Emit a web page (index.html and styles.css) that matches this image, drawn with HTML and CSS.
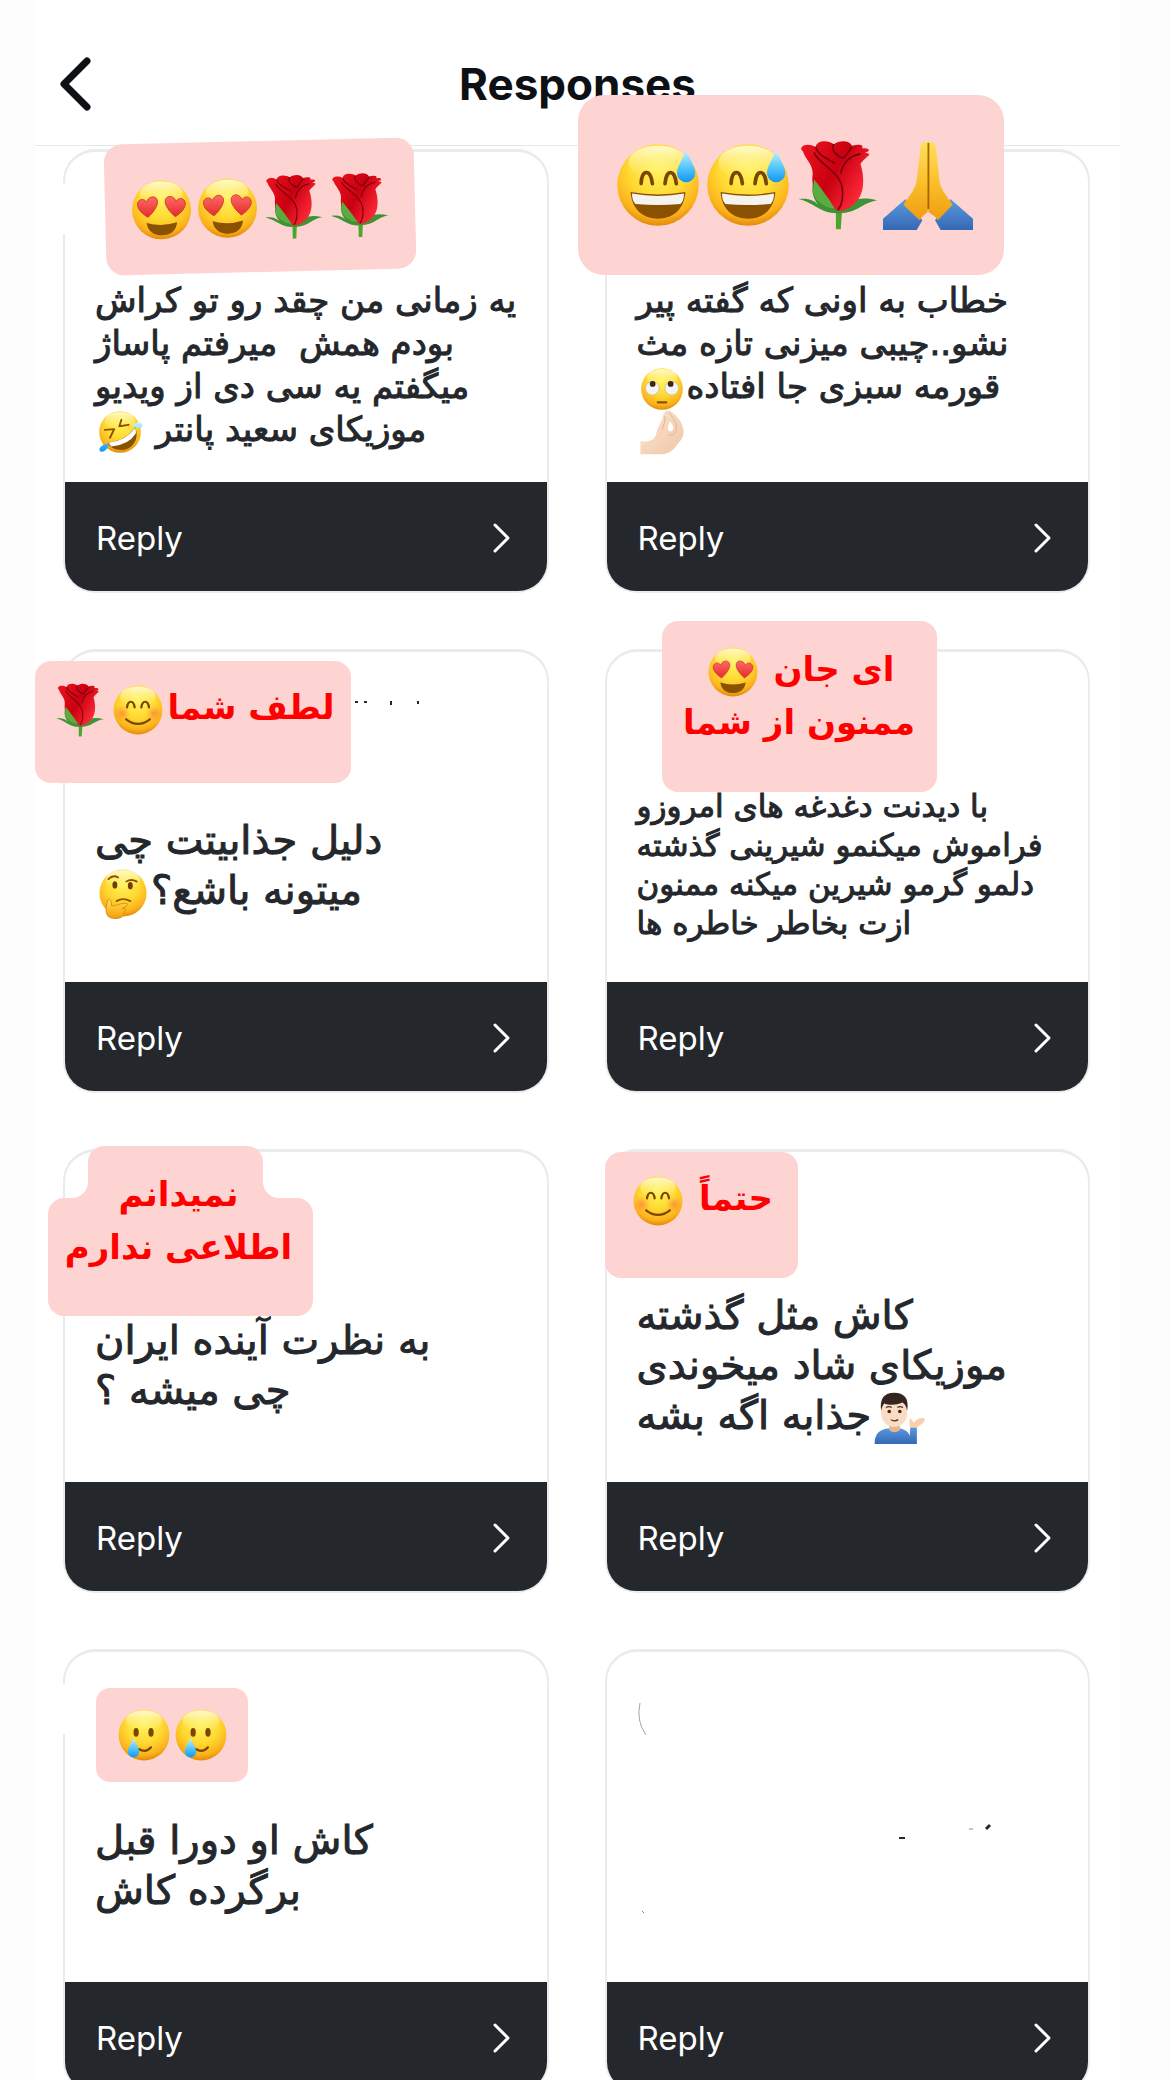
FILE: index.html
```html
<!DOCTYPE html>
<html lang="en">
<head>
<meta charset="utf-8">
<meta name="viewport" content="width=device-width, initial-scale=1">
<title>Responses</title>
<link rel="stylesheet" href="styles.css">
</head>
<body>
<svg class="defs" width="0" height="0" aria-hidden="true">
  <defs>
    <radialGradient id="g-face" cx=".5" cy=".3" r=".72">
      <stop offset="0" stop-color="#fff35c"/><stop offset=".5" stop-color="#ffd932"/><stop offset=".82" stop-color="#fbb21b"/><stop offset="1" stop-color="#dd8308"/>
    </radialGradient>
    <linearGradient id="g-shine" x2="0" y2="1"><stop offset="0" stop-color="#fffde0" stop-opacity=".9"/><stop offset="1" stop-color="#fff58a" stop-opacity="0"/></linearGradient>
    <linearGradient id="g-heart" x2="0" y2="1"><stop offset="0" stop-color="#ff6a63"/><stop offset="1" stop-color="#e32b2f"/></linearGradient>
    <linearGradient id="g-drop" x2="0" y2="1"><stop offset="0" stop-color="#c9f2ff"/><stop offset=".5" stop-color="#5ccbff"/><stop offset="1" stop-color="#1196f0"/></linearGradient>
    <linearGradient id="g-rose" x2="1" y2=".6"><stop offset="0" stop-color="#f0141f"/><stop offset=".55" stop-color="#c9000f"/><stop offset="1" stop-color="#ff2a3a"/></linearGradient>
    <linearGradient id="g-hand" x2="0" y2="1"><stop offset="0" stop-color="#ffe05a"/><stop offset=".5" stop-color="#fbc02c"/><stop offset="1" stop-color="#ef9c10"/></linearGradient>
    <linearGradient id="g-sleeve" x2="0" y2="1"><stop offset="0" stop-color="#5c9be0"/><stop offset="1" stop-color="#3468b4"/></linearGradient>
    <linearGradient id="g-skin" x2="1" y2="1"><stop offset="0" stop-color="#fbe6d3"/><stop offset="1" stop-color="#efc6a6"/></linearGradient>
    <radialGradient id="g-blush"><stop offset="0" stop-color="#ff6b3d" stop-opacity=".6"/><stop offset="1" stop-color="#ff8a3d" stop-opacity="0"/></radialGradient>
    <symbol id="face" viewBox="0 0 64 64">
      <circle cx="32" cy="32" r="29" fill="url(#g-face)"/>
      <ellipse cx="32" cy="16" rx="21" ry="12" fill="url(#g-shine)"/>
    </symbol>
    <symbol id="love" viewBox="0 0 64 64">
      <use href="#face"/>
      <path id="heart" d="M18.500 39C12 35 8 30 8.500 25.500 9 21 15 19.500 17.500 24 19 18.500 26 17 28 22 29.500 27 24 34.500 18.500 39Z" fill="url(#g-heart)" stroke="#c8312c" stroke-width=".8"/>
      <use href="#heart" transform="matrix(-1 0 0 1 64 0)"/>
      <path d="M17 44.500Q32 49 47 44.500C46 53 40 57 32 57S18 53 17 44.500Z" fill="#8a5200"/>
    </symbol>
    <symbol id="sweat" viewBox="0 0 64 64">
      <use href="#face"/>
      <path d="M20 31C20 21 27 20 28 31M37 31C38 20 44 21 45 31" fill="none" stroke="#7a4500" stroke-width="2.600" stroke-linecap="round"/>
      <path d="M12.500 37Q32 40.500 51.500 37C50.500 50 42 56 32 56S13.500 50 12.500 37Z" fill="#8a5200"/>
      <path d="M13.500 38Q32 41.500 50.500 38Q50.500 43 48 45.500Q32 47 16 45.500Q13.500 43 13.500 38Z" fill="#f5f3f0"/>
      <path d="M52 7C49 15 45.500 19 45.500 23.500a6.500 6.500 0 0 0 13 0C58.500 19 55 15 52 7Z" fill="url(#g-drop)"/>
    </symbol>
    <symbol id="rose" viewBox="0 0 64 64">
      <path d="M30.500 48h4.500l-1 15.500h-3.500Z" fill="#4fa52c"/>
      <path d="M4 42C11 41 15 43 18 46C13 40 13 34 15 28C20 34 24 40 31 48C40 42 50 40 60 43C50 44 46 52 33 52C20 53 16 45 4 42Z" fill="#3f9235"/>
      <path d="M7 8C3 5 10 1 16 5C17 0 25 0 29 3C33 0 40 0 42 4C46 3 51 3 49 6C54 5 56 8 51 9C58 10 52 11 48 17C52 30 51 46 34 50.500C22 48 12 38 14 24C14 17 9 14 7 8Z" fill="url(#g-rose)"/>
      <path d="M15 28C20 34 25 41 30 49C22 48 15 43 14 36Z" fill="#5daa3e"/>
      <path d="M15 9C18 17 33 22 35 34C36 41 34 47 32 50M48 10C40 11 35 17 34 24M16 5C18 12 27 14 30 17M29 3C26 7 32 12 36 13L42 5" fill="none" stroke="#7d0010" stroke-width="1.200"/>
    </symbol>
    <symbol id="pray" viewBox="0 0 64 64">
      <path d="M0 56L16 42 28 57 24 64H0ZM64 56L48 42 37 57 41 64H64Z" fill="url(#g-sleeve)"/>
      <path d="M32 2C28 0 26.500 3 26.500 8L24 28C23 36 18 40 14.500 46L26 57C29 52 32 53 32 49C32 53 36 52 39 57L49.500 46C46 40 41 36 40 28L38 8C37.500 3 36 0 32 2Z" fill="url(#g-hand)"/>
      <path d="M32.300 2V49" stroke="#a86500" stroke-width="1.300"/>
    </symbol>
    <symbol id="rofl" viewBox="0 0 64 64">
      <use href="#face"/>
      <path d="M11 29L24 28 18 40M34 15L31 24 44 22" fill="none" stroke="#8a5200" stroke-width="2.600" stroke-linecap="round" stroke-linejoin="round"/>
      <path d="M15 47Q42 43 53 25C60 42 49 57 34 57C24 57 18 53 15 47Z" fill="#8a5200"/>
      <path d="M16 47Q42 43 53 26Q55 31 54 34Q44 50 20 52Z" fill="#fff"/>
      <path d="M49 23C54 18 62 17 63 22S58 29 49 23ZM17 48C15 56 9 61 5 59S4 49 17 48Z" fill="url(#g-drop)"/>
    </symbol>
    <symbol id="roll" viewBox="0 0 64 64">
      <use href="#face"/>
      <circle cx="18.500" cy="31" r="9.500" fill="#f4f4f4" stroke="#c9b89a"/><circle cx="45.500" cy="31" r="9.500" fill="#f4f4f4" stroke="#c9b89a"/>
      <circle cx="19" cy="25" r="4" fill="#3a2617"/><circle cx="44" cy="25" r="4" fill="#3a2617"/>
      <path d="M26 50.500H38" stroke="#8a5200" stroke-width="3" stroke-linecap="round"/>
    </symbol>
    <symbol id="pinch" viewBox="0 0 64 64">
      <path fill-rule="evenodd" d="M2 45C16 46 22 43 24 34C26 24 31 19 33 11C35 4 39 0 44 3C53 9 62 20 62 31C62 42 57 44 52 51C46 60 38 63 28 63H2ZM43 17C41 22 38 27 42 31C47 32 49 27 47 23Z" fill="url(#g-skin)"/>
      <path d="M42 5C46 10 53 19 52 28C51 35 47 38 40 36M36 10C37 17 34 23 32 29" fill="none" stroke="#deb08e" stroke-width="1.200"/>
    </symbol>
    <symbol id="think" viewBox="0 0 64 64">
      <use href="#face"/>
      <ellipse cx="22" cy="22" rx="3" ry="4.500" fill="#704000"/><ellipse cx="41" cy="23" rx="3" ry="4.500" fill="#704000"/>
      <path d="M14 15Q20 9 26 13M36 18Q42 14 49 18M24 42Q32 37 41 42" fill="none" stroke="#8a5200" stroke-width="2.200" stroke-linecap="round"/>
      <path d="M13 41C16 38 18 42 18 48C24 48 32 43 37 45C39 47 35 49 31 51C35 50 36 53 33 56C33 63 25 64 19 63C10 62 10 52 13 41Z" fill="url(#g-hand)" stroke="#d98b10" stroke-width="1.200"/>
    </symbol>
    <symbol id="blush" viewBox="0 0 64 64">
      <use href="#face"/>
      <circle cx="13" cy="36" r="10" fill="url(#g-blush)"/><circle cx="51" cy="36" r="10" fill="url(#g-blush)"/>
      <path d="M19 29C20 20 27 20 28 29M36 29C37 20 44 20 45 29M18 43Q32 54 46 43" fill="none" stroke="#7a4500" stroke-width="2.600" stroke-linecap="round"/>
    </symbol>
    <symbol id="tear" viewBox="0 0 64 64">
      <use href="#face"/>
      <ellipse cx="23" cy="29" rx="3" ry="5" fill="#7a4500"/><ellipse cx="40" cy="29" rx="3" ry="5" fill="#7a4500"/>
      <path d="M26 48Q34 53 40 46" fill="none" stroke="#7a4500" stroke-width="2.400" stroke-linecap="round"/>
      <path d="M20 35C17 43 13.500 46 13.500 51a6.500 6.500 0 0 0 13 0C26.500 46 23 43 20 35Z" fill="url(#g-drop)"/>
    </symbol>
    <symbol id="tip" viewBox="0 0 64 64">
      <path d="M2 64C2 52 8 46 18 45H34C40 47 44 49 45 54L46 43H54V64Z" fill="url(#g-sleeve)"/>
      <path d="M46 44C45 39 44 36 46 32C48 34 49 36 50 38C55 31 61 31 64 33C64 38 58 41 54 44Z" fill="#fbcfae"/>
      <path d="M20 40H33V47Q26 52 20 47Z" fill="#e9b590"/>
      <ellipse cx="26" cy="26" rx="16" ry="17" fill="#fadcc4"/>
      <path d="M10 23C8 8 14 1 26 1S45 8 42 23C41 19 40 15 36 13C28 17 18 16 14 14C12 16 11 19 10 23Z" fill="#33251f"/>
      <circle cx="20" cy="24" r="2.200" fill="#3a2617"/><circle cx="33" cy="24" r="2.200" fill="#3a2617"/>
      <path d="M16 19Q20 17 23 19M30 19Q33 17 37 19M22 34Q26 37 31 34" fill="none" stroke="#4a2f20" stroke-width="1.500"/>
    </symbol>
  </defs>
</svg>

<div class="screen">
  <header class="topbar">
    <button class="back" type="button" aria-label="Back">
      <svg width="32" height="54" viewBox="0 0 32 54" fill="none" stroke="currentColor" stroke-width="7" stroke-linecap="round" stroke-linejoin="round"><path d="M27 4L4 27 27 50"/></svg>
    </button>
    <h1 class="title">Responses</h1>
  </header>

  <main class="grid">
    <article class="card card--worn-top">
      <div class="body"><p class="question size-m" dir="rtl" lang="fa">یه زمانی من چقد رو تو کراش<br>بودم همش &nbsp;میرفتم پاساژ<br>میگفتم یه سی دی از ویدیو<br>موزیکای سعید پانتر <svg class="emoji" role="img" aria-label="🤣"><use href="#rofl"/></svg></p></div>
      <button class="reply" type="button">Reply<svg class="chevron" viewBox="0 0 18 30"><path d="M2 2L15 15 2 28"/></svg></button>
      <div class="sticker sticker--hearts">
        <svg role="img" aria-label="😍"><use href="#love"/></svg><svg role="img" aria-label="😍"><use href="#love"/></svg><svg role="img" aria-label="🌹"><use href="#rose"/></svg><svg role="img" aria-label="🌹"><use href="#rose"/></svg>
      </div>
    </article>

    <article class="card">
      <div class="body"><p class="question size-m" dir="rtl" lang="fa">خطاب به اونی که گفته پیر<br>نشو..چیبی میزنی تازه مث<br>قورمه سبزی جا افتاده<svg class="emoji" role="img" aria-label="🙄"><use href="#roll"/></svg><br><svg class="emoji" role="img" aria-label="🤌🏻"><use href="#pinch"/></svg></p></div>
      <button class="reply" type="button">Reply<svg class="chevron" viewBox="0 0 18 30"><path d="M2 2L15 15 2 28"/></svg></button>
      <div class="sticker sticker--thanks">
        <svg role="img" aria-label="😅"><use href="#sweat"/></svg><svg role="img" aria-label="😅"><use href="#sweat"/></svg><svg role="img" aria-label="🌹"><use href="#rose"/></svg><svg role="img" aria-label="🙏"><use href="#pray"/></svg>
      </div>
    </article>

    <article class="card">
      <div class="body"><p class="question size-l" dir="rtl" lang="fa">دلیل جذابیتت چی<br>میتونه باشع؟<svg class="emoji" role="img" aria-label="🤔"><use href="#think"/></svg></p></div>
      <button class="reply" type="button">Reply<svg class="chevron" viewBox="0 0 18 30"><path d="M2 2L15 15 2 28"/></svg></button>
      <svg class="specks specks--name" width="72" height="10" aria-hidden="true"><path d="M1 2h3M10 2h3M37 1v4M64 1v3" stroke="#24272b" stroke-width="2"/></svg>
      <div class="sticker sticker--kind"><p dir="rtl" lang="fa">لطف شما<svg class="emoji" role="img" aria-label="😊"><use href="#blush"/></svg><svg class="emoji" role="img" aria-label="🌹"><use href="#rose"/></svg></p></div>
    </article>

    <article class="card">
      <div class="body"><p class="question size-s" dir="rtl" lang="fa">با دیدنت دغدغه های امروزو<br>فراموش میکنمو شیرینی گذشته<br>دلمو گرمو شیرین میکنه ممنون<br>ازت بخاطر خاطره ها</p></div>
      <button class="reply" type="button">Reply<svg class="chevron" viewBox="0 0 18 30"><path d="M2 2L15 15 2 28"/></svg></button>
      <div class="sticker sticker--dear"><p dir="rtl" lang="fa">ای جان <svg class="emoji" role="img" aria-label="😍"><use href="#love"/></svg><br>ممنون از شما</p></div>
    </article>

    <article class="card">
      <div class="body"><p class="question size-l" dir="rtl" lang="fa">به نظرت آینده ایران<br>چی میشه ؟</p></div>
      <button class="reply" type="button">Reply<svg class="chevron" viewBox="0 0 18 30"><path d="M2 2L15 15 2 28"/></svg></button>
      <div class="sticker sticker--unsure">
        <svg class="shape" width="265" height="170" viewBox="0 0 265 170" aria-hidden="true"><path d="M56 0H199a16 16 0 0 1 16 16V36a16 16 0 0 0 16 16H249a16 16 0 0 1 16 16V154a16 16 0 0 1 -16 16H16a16 16 0 0 1 -16 -16V68a16 16 0 0 1 16 -16H24a16 16 0 0 0 16 -16V16a16 16 0 0 1 16 -16Z" fill="#fed4d3"/></svg>
        <p dir="rtl" lang="fa">نمیدانم<br>اطلاعی ندارم</p>
      </div>
    </article>

    <article class="card">
      <div class="body"><p class="question size-l" dir="rtl" lang="fa">کاش مثل گذشته<br>موزیکای شاد میخوندی<br><svg class="emoji" role="img" aria-label="💁🏻‍♂️"><use href="#tip"/></svg>جذابه اگه بشه</p></div>
      <button class="reply" type="button">Reply<svg class="chevron" viewBox="0 0 18 30"><path d="M2 2L15 15 2 28"/></svg></button>
      <div class="sticker sticker--sure"><p dir="rtl" lang="fa">حتماً <svg class="emoji" role="img" aria-label="😊"><use href="#blush"/></svg></p></div>
    </article>

    <article class="card card--worn-top">
      <div class="body"><p class="question size-l" dir="rtl" lang="fa">کاش او دورا قبل<br>برگرده کاش</p></div>
      <button class="reply" type="button">Reply<svg class="chevron" viewBox="0 0 18 30"><path d="M2 2L15 15 2 28"/></svg></button>
      <div class="sticker sticker--tears">
        <svg role="img" aria-label="🥲"><use href="#tear"/></svg><svg role="img" aria-label="🥲"><use href="#tear"/></svg>
      </div>
    </article>

    <article class="card">
      <div class="body"></div>
      <button class="reply" type="button">Reply<svg class="chevron" viewBox="0 0 18 30"><path d="M2 2L15 15 2 28"/></svg></button>
      <svg class="specks specks--message" width="360" height="220" viewBox="0 0 360 220" fill="none" aria-hidden="true"><path d="M3 1Q-1 19 9 33" stroke="#a8a4a2"/><path d="M262 136h6" stroke="#24272b" stroke-width="2"/><path d="M332 127h4M5 209l2 2" stroke="#8d8886"/><path d="M349 127l4-4" stroke="#24272b" stroke-width="3"/></svg>
    </article>
  </main>
</div>
</body>
</html>
```
FILE: styles.css
```css
* { box-sizing: border-box; }

body {
  margin: 0;
  background: #fdfdfd;
  color: #24272b;
  font-family: Inter, "Liberation Sans", sans-serif;
}

.defs { position: absolute; }

.screen {
  height: 100vh;
  padding: 0 50px 0 35px;
  overflow: hidden auto;
  scrollbar-width: none;
}

.topbar {
  display: grid;
  grid-template-columns: 80px 1fr 80px;
  align-items: center;
  height: 146px;
  padding-top: 23px;
  background: #fff;
  border-bottom: 1px solid #e6e8ea;
}

.back {
  display: flex;
  padding: 0 0 0 25px;
  border: 0;
  background: none;
  color: #0d1014;
}

.title {
  margin: 0;
  color: #0d1014;
  font-size: 44px;
  font-weight: 700;
  line-height: 52px;
  text-align: center;
}

.grid {
  display: grid;
  grid-template-columns: 1fr 1fr;
  gap: 56px;
  padding: 3px 30px 56px 28px;
  background: #fff;
}

.card {
  position: relative;
  display: flex;
  flex-direction: column;
  min-height: 444px;
  border: 2px solid #e9ebed;
  border-top-width: 3px;
  border-radius: 32px;
  background: #fff;
}

/* stretch of the outline that has been rubbed out */
.card--worn-top::before {
  content: "";
  position: absolute;
  top: 32px;
  left: -3px;
  width: 4px;
  height: 50px;
  background: #fff;
}

.body {
  flex: 1;
  display: flex;
  flex-direction: column;
  justify-content: center;
  padding: 96px 30px 0;
}

.question {
  margin: 0;
  font-family: "DejaVu Sans", sans-serif;
  text-align: left;
  white-space: nowrap;
  -webkit-text-stroke: 1px currentColor;
}

.size-s { font-size: 31px; line-height: 39px; }
.size-m { font-size: 34px; line-height: 43px; }
.size-l { font-size: 40px; line-height: 50px; }

.emoji {
  width: 46px;
  height: 46px;
  margin: -8px 2px;
  vertical-align: middle;
}

.size-l .emoji {
  width: 52px;
  height: 52px;
}

.reply {
  display: flex;
  align-items: center;
  justify-content: space-between;
  height: 109px;
  padding: 2px 36px 0 31px;
  border: 0;
  border-radius: 0 0 29px 29px;
  background: #24272c;
  color: #fff;
  font-family: inherit;
  font-size: 33px;
  line-height: 40px;
}

.chevron {
  width: 18px;
  height: 30px;
  fill: none;
  stroke: currentColor;
  stroke-width: 3;
  stroke-linecap: round;
  stroke-linejoin: round;
}

.specks { position: absolute; }
.specks--name { top: 48px; left: 289px; }
.specks--message { top: 50px; left: 30px; }

.sticker {
  position: absolute;
  display: flex;
  justify-content: center;
  border-radius: 16px;
  background: #fed4d3;
  color: #f00;
  font-family: "DejaVu Sans", sans-serif;
  font-size: 34px;
  font-weight: 700;
  line-height: 53px;
  text-align: center;
  white-space: nowrap;
}

.sticker p { position: relative; margin: 0; }

.sticker .emoji {
  width: 54px;
  height: 54px;
}

.sticker--hearts {
  top: -11px;
  left: 40px;
  gap: 1px;
  width: 310px;
  height: 131px;
  padding-top: 34px;
  border-radius: 18px;
  transform: rotate(-1.400deg);
}

.sticker--hearts svg { width: 65px; height: 65px; }

.sticker--thanks {
  top: -57px;
  left: -29px;
  width: 426px;
  height: 180px;
  padding: 45px 0 0 4px;
  border-radius: 26px;
}

.sticker--thanks svg { width: 90px; height: 90px; }

.sticker--kind {
  top: 9px;
  left: -30px;
  width: 316px;
  height: 122px;
  padding-top: 20px;
}

.sticker--dear {
  top: -31px;
  left: 55px;
  width: 275px;
  height: 171px;
  padding-top: 22px;
}

.sticker--unsure {
  top: -6px;
  left: -17px;
  width: 265px;
  height: 170px;
  padding-top: 22px;
  background: none;
}

.shape { position: absolute; inset: 0; }
.sticker--unsure p { padding-right: 4px; }

.sticker--sure {
  top: 0;
  left: -2px;
  width: 193px;
  height: 126px;
  padding-top: 20px;
}

.sticker--tears {
  top: 36px;
  left: 31px;
  gap: 1px;
  width: 152px;
  height: 94px;
  padding-top: 19px;
  border-radius: 14px;
}

.sticker--tears svg { width: 56px; height: 56px; }
```
